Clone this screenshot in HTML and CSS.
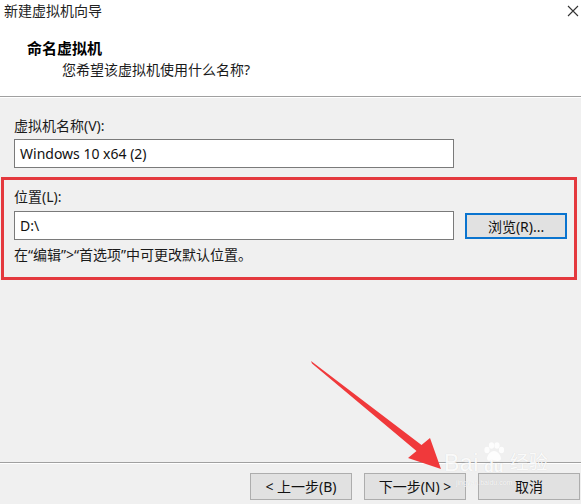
FILE: index.html
```html
<!DOCTYPE html>
<html lang="zh-CN">
<head>
<meta charset="utf-8">
<title>新建虚拟机向导</title>
<link rel="stylesheet" href="styles.css">
</head>
<body>
<div class="dialog">
  <header class="header">
    <div class="titlebar">
      <span class="title">新建虚拟机向导</span>
      <svg class="close" width="12" height="12" viewBox="0 0 12 12"><path d="M1 1 L11 11 M11 1 L1 11" stroke="#333" stroke-width="1.1" fill="none"/></svg>
    </div>
    <div class="heading">命名虚拟机</div>
    <div class="subtitle">您希望该虚拟机使用什么名称?</div>
  </header>

  <main class="body">
    <div class="field">
      <label class="label">虚拟机名称(V):</label>
      <div class="input name-input">Windows 10 x64 (2)</div>
    </div>
    <div class="field location">
      <label class="label">位置(L):</label>
      <div class="row">
        <div class="input path-input">D:\</div>
        <button class="btn browse">浏览(R)...</button>
      </div>
      <p class="hint">在“编辑”&gt;“首选项”中可更改默认位置。</p>
    </div>
    <div class="highlight"></div>
  </main>

  <footer class="footer">
    <button class="btn">&lt; 上一步(B)</button>
    <button class="btn">下一步(N) &gt;</button>
    <button class="btn">取消</button>
  </footer>
</div>

<svg class="arrow" width="581" height="504" viewBox="0 0 581 504">
  <polygon points="311,361 421.5,445 430,438 441,469 408,458 416.5,451 312,363.5" fill="#f0393b"/>
</svg>

<div class="watermark">
  <div class="wm-main">
    <span class="wm-bai">Bai</span>
    <span class="wm-du">
      <svg class="paw" width="24" height="20" viewBox="0 0 24 20">
        <ellipse cx="5" cy="8" rx="2.6" ry="3.2"/>
        <ellipse cx="9.5" cy="3.5" rx="2.6" ry="3.2"/>
        <ellipse cx="15" cy="3.5" rx="2.6" ry="3.2"/>
        <ellipse cx="19.5" cy="8" rx="2.6" ry="3.2"/>
        <path d="M12 9 C8 9 5 14 5 16.5 C5 19 8 19.5 12 18.5 C16 19.5 19 19 19 16.5 C19 14 16 9 12 9 Z"/>
      </svg>
      <span class="du-text">du</span>
    </span>
    <span class="wm-cn">经验</span>
  </div>
  <div class="wm-url">jingyan.baidu.com</div>
</div>
</body>
</html>
```

FILE: styles.css
```css
* { box-sizing: border-box; }

html, body {
  margin: 0;
  padding: 0;
}

body {
  width: 581px;
  height: 504px;
  overflow: hidden;
  position: relative;
  background: #f0f0f0;
  font-family: "Noto Sans", "Noto Sans CJK SC", sans-serif;
  font-size: 14px;
  color: #1a1a1a;
}

.dialog {
  display: flex;
  flex-direction: column;
  height: 504px;
}

/* white wizard banner */
.header {
  background: #fff;
  height: 97px;
  border-bottom: 1px solid #a0a0a0;
  box-shadow: 0 1px 0 #fff;
  flex-shrink: 0;
}

.titlebar {
  height: 22px;
  display: flex;
  align-items: center;
  justify-content: space-between;
  padding: 0 2px 0 4px;
}

.title {
  font-size: 14px;
  line-height: 20px;
  color: #222;
}

.close { display: block; }

.heading {
  margin-top: 16px;
  padding-left: 27px;
  font-size: 15px;
  font-weight: 700;
  line-height: 20px;
  color: #000;
}

.subtitle {
  margin-top: 2px;
  padding-left: 62px;
  line-height: 20px;
}

/* form area */
.body {
  flex: 1;
  position: relative;
  padding: 19px 14px 0 14px;
}

.label {
  display: block;
  line-height: 20px;
}

.input {
  margin-top: 3px;
  height: 29px;
  background: #fff;
  border: 1px solid #7a7a7a;
  padding: 0 5px;
  line-height: 27px;
  color: #111;
}

.name-input { width: 440px; }

.location { margin-top: 19px; }

.row {
  display: flex;
  align-items: center;
  margin-top: 4px;
  gap: 11px;
}

.row .input { margin-top: 0; }

.path-input { width: 441px; }

.hint {
  margin: 5px 0 0 0;
  line-height: 20px;
}

.btn {
  width: 102px;
  height: 27px;
  padding: 0;
  background: #e1e1e1;
  border: 1px solid #adadad;
  font-family: "Noto Sans", "Noto Sans CJK SC", sans-serif;
  font-size: 14px;
  color: #111;
  line-height: 24px;
}

.browse {
  height: 26px;
  border: 2px solid #0a74cf;
}

/* red annotation frame around the location group */
.highlight {
  position: absolute;
  left: 1px;
  top: 80px;
  width: 576px;
  height: 103px;
  border: 3px solid #e4393e;
}

.footer {
  flex-shrink: 0;
  height: 42px;
  border-top: 1px solid #a0a0a0;
  box-shadow: inset 0 1px 0 #fff;
  display: flex;
  gap: 12px;
  padding: 10px 0 0 250px;
}

.arrow {
  position: absolute;
  left: 0;
  top: 0;
  pointer-events: none;
}

/* site stamp in the lower right corner */
.watermark {
  position: absolute;
  left: 444px;
  top: 438px;
  color: rgba(255, 255, 255, 0.9);
  font-family: "Liberation Sans", "Noto Sans CJK SC", sans-serif;
  pointer-events: none;
  text-shadow: 0 0 1px rgba(0, 0, 0, 0.12);
}

.wm-main {
  display: flex;
  align-items: flex-end;
  height: 36px;
}

.wm-bai {
  font-size: 23px;
  line-height: 22px;
  letter-spacing: 0.5px;
}

.wm-du {
  display: flex;
  flex-direction: column;
  align-items: center;
  margin-left: 3px;
}

.paw {
  display: block;
  fill: rgba(255, 255, 255, 0.85);
  margin-bottom: -3px;
}

.du-text {
  font-size: 16px;
  font-weight: 700;
  line-height: 15px;
  padding: 0 2px;
  border-radius: 4px;
}

.wm-cn {
  margin-left: 4px;
  font-size: 19px;
  line-height: 22px;
}

.wm-url {
  margin-top: 4px;
  margin-left: 12px;
  font-size: 7px;
  line-height: 9px;
  color: rgba(255, 255, 255, 0.85);
}
```
